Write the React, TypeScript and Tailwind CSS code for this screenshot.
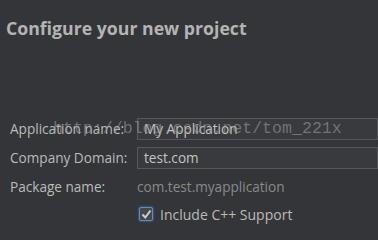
import React from "react";

export default function App() {
  return (
    <div
      className="relative w-[378px] h-[240px] overflow-hidden bg-[#333538] text-[#bbbbbb]"
      style={{ fontFamily: '"Open Sans", "DejaVu Sans", sans-serif' }}
    >
      <div className="pl-[6px] pt-[16px] text-[17.7px] font-bold leading-[24px] text-[#b4b4b4]">
        Configure your new project
      </div>
      <div className="mt-[78px] flex flex-col pl-[10px]">
        <div className="flex items-center h-[22px]">
          <div className="w-[127px] text-[13.6px]">Application name:</div>
          <div className="flex-1 h-[22px] border border-[#55585b] bg-[#383a3d] pl-[6px] flex items-center text-[13.6px] text-[#c4c4c4]">
            My Application
          </div>
        </div>
        <div className="flex items-center h-[22px] mt-[7px]">
          <div className="w-[127px] text-[13.6px]">Company Domain:</div>
          <div className="flex-1 h-[22px] border border-[#55585b] bg-[#383a3d] pl-[6px] flex items-center text-[13.6px] text-[#c4c4c4]">
            test.com
          </div>
        </div>
        <div className="flex items-center h-[22px] mt-[7px]">
          <div className="w-[127px] text-[13.6px]">Package name:</div>
          <div className="text-[13.6px] text-[#8a8a8a]">com.test.myapplication</div>
        </div>
        <div className="flex items-center h-[22px] mt-[5px] pl-[129px]">
          <div className="w-[14px] h-[14px] rounded-[2px] border border-[#5b8fc7] bg-[#45484b] shadow-[0_0_2px_1px_rgba(70,120,180,0.5)] flex items-center justify-center">
            <svg width="11" height="11" viewBox="0 0 11 11">
              <path d="M1.5 5.5 L4.3 8.5 L9.5 1.5" fill="none" stroke="#cfcfcf" strokeWidth="2" />
            </svg>
          </div>
          <div className="ml-[7px] text-[14px]">Include C++ Support</div>
        </div>
      </div>
      <div
        className="absolute left-[53px] top-[119px] text-[16.6px] leading-[20px] text-[#9a9a9a]/60 pointer-events-none"
        style={{ fontFamily: '"Liberation Mono", monospace' }}
      >
        http://blog.csdn.net/tom_221x
      </div>
    </div>
  );
}
